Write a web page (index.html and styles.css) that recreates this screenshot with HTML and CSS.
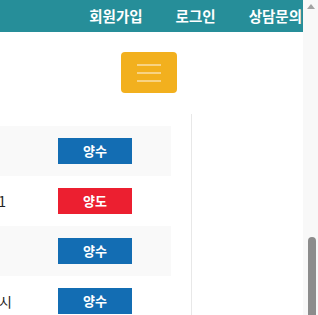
FILE: index.html
```html
<!DOCTYPE html>
<html lang="ko">
<head>
    <meta charset="UTF-8">
    <meta name="viewport" content="width=device-width, initial-scale=1.0">
    <title>양수도 게시판</title>
    <link rel="stylesheet" href="styles.css">
</head>
<body>
    <div class="page">
        <header>
            <nav>
                <a href="#">회원가입</a>
                <a href="#">로그인</a>
                <a href="#">상담문의</a>
            </nav>
        </header>
        <div class="menu-bar">
            <button class="menu-btn" aria-label="메뉴">
                <span></span>
                <span></span>
                <span></span>
            </button>
        </div>
        <div class="content">
            <div class="list">
                <div class="row">
                    <span class="name"></span>
                    <a href="#" class="tag buy">양수</a>
                </div>
                <div class="row">
                    <span class="name short">경기 2021</span>
                    <a href="#" class="tag sell">양도</a>
                </div>
                <div class="row">
                    <span class="name"></span>
                    <a href="#" class="tag buy">양수</a>
                </div>
                <div class="row">
                    <span class="name">대전광역시</span>
                    <a href="#" class="tag buy">양수</a>
                </div>
            </div>
            <div class="side"></div>
        </div>
    </div>
    <div class="scrollbar">
        <div class="arrow"></div>
        <div class="track"></div>
        <div class="thumb"></div>
    </div>
</body>
</html>
```

FILE: styles.css
```css
body {
    margin: 0;
    padding: 0;
    display: flex;
    height: 315px;
    overflow: hidden;
    background: #fff;
    font-family: "Noto Sans CJK KR", "Noto Sans", sans-serif;
}
.page {
    width: 303px;
    overflow: hidden;
}
header {
    height: 32px;
    background-color: #268e99;
}
nav {
    display: flex;
    justify-content: flex-end;
    height: 32px;
    align-items: center;
    padding-right: 1px;
}
nav a {
    color: white;
    text-decoration: none;
    font-size: 14.5px;
    font-weight: bold;
    line-height: 16px;
    margin-left: 33px;
    white-space: nowrap;
}
.menu-bar {
    padding: 20px 0 21px 121px;
}
.menu-btn {
    display: flex;
    flex-direction: column;
    justify-content: center;
    align-items: center;
    gap: 6px;
    width: 56px;
    height: 41px;
    padding: 0;
    border: none;
    border-radius: 4px;
    background-color: #f2b01e;
}
.menu-btn span {
    display: block;
    width: 24px;
    height: 2px;
    background: rgba(255, 255, 255, 0.45);
}
.content {
    display: flex;
    height: 210px;
}
.list {
    width: 171px;
    padding-top: 12px;
}
.row {
    display: flex;
    align-items: center;
    height: 50px;
}
.row:nth-child(odd) {
    background-color: #f9f9f9;
}
.name {
    width: 58px;
    display: flex;
    justify-content: flex-end;
    padding-right: 46px;
    box-sizing: border-box;
    white-space: nowrap;
    font-size: 14px;
    color: #222;
}
.name.short {
    padding-right: 52px;
}
.tag {
    width: 74px;
    height: 26px;
    line-height: 26px;
    text-align: center;
    color: white;
    font-size: 13px;
    font-weight: bold;
    text-decoration: none;
}
.buy {
    background-color: #136db3;
}
.sell {
    background-color: #ec1f30;
}
.side {
    margin-left: 20px;
    border-left: 1px solid #e8e8e8;
    flex: 1;
}
.scrollbar {
    width: 15px;
    background: #f8f8f8;
    display: flex;
    flex-direction: column;
    align-items: center;
}
.arrow {
    margin-top: 4px;
    width: 0;
    height: 0;
    border-left: 4px solid transparent;
    border-right: 4px solid transparent;
    border-bottom: 5px solid #a3a3a3;
}
.track {
    height: 228px;
}
.thumb {
    width: 8px;
    flex: 1;
    margin-left: 2px;
    background: #8c8c8c;
    border-radius: 4px 4px 0 0;
}
```
